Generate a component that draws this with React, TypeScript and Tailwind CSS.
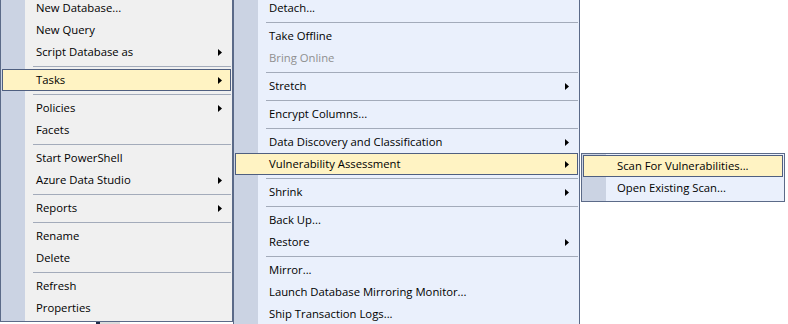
type Entry = { label: string; arrow?: boolean; disabled?: boolean; active?: boolean } | 'sep';

const tasksMenu: Entry[] = [
  { label: 'New Database...' },
  { label: 'New Query' },
  { label: 'Script Database as', arrow: true },
  'sep',
  { label: 'Tasks', arrow: true, active: true },
  'sep',
  { label: 'Policies', arrow: true },
  { label: 'Facets' },
  'sep',
  { label: 'Start PowerShell' },
  { label: 'Azure Data Studio', arrow: true },
  'sep',
  { label: 'Reports', arrow: true },
  'sep',
  { label: 'Rename' },
  { label: 'Delete' },
  'sep',
  { label: 'Refresh' },
  { label: 'Properties' },
];

const taskItems: Entry[] = [
  { label: 'Detach...' },
  'sep',
  { label: 'Take Offline' },
  { label: 'Bring Online', disabled: true },
  'sep',
  { label: 'Stretch', arrow: true },
  'sep',
  { label: 'Encrypt Columns...' },
  'sep',
  { label: 'Data Discovery and Classification', arrow: true },
  { label: 'Vulnerability Assessment', arrow: true, active: true },
  'sep',
  { label: 'Shrink', arrow: true },
  'sep',
  { label: 'Back Up...' },
  { label: 'Restore', arrow: true },
  'sep',
  { label: 'Mirror...' },
  { label: 'Launch Database Mirroring Monitor...' },
  { label: 'Ship Transaction Logs...' },
];

const vaItems: Entry[] = [
  { label: 'Scan For Vulnerabilities...', active: true },
  { label: 'Open Existing Scan...' },
];

function Arrow() {
  return (
    <svg width="4" height="7" viewBox="0 0 4 7" className="ml-auto shrink-0">
      <polygon points="0,0 4,3.5 0,7" fill="#000" />
    </svg>
  );
}

function MenuRows({ items }: { items: Entry[] }) {
  return (
    <>
      {items.map((it, i) =>
        it === 'sep' ? (
          <div key={i} className="h-[6px] pt-[3px] pl-[31px]">
            <div className="h-px bg-[#a3abba]" />
          </div>
        ) : (
          <div
            key={i}
            className={
              it.active
                ? 'flex h-[22px] items-center border border-[#4f5f80] bg-[#fff3c3] pl-[33px] pr-[8px]'
                : 'flex h-[22px] items-center pl-[34px] pr-[9px]'
            }
          >
            <span className={it.disabled ? 'text-[#8f8f8f]' : 'text-black'}>{it.label}</span>
            {it.arrow && <Arrow />}
          </div>
        )
      )}
    </>
  );
}

export default function App() {
  return (
    <div className="relative h-[324px] w-[788px] overflow-hidden bg-white font-['Open_Sans','Liberation_Sans',sans-serif] text-[11.3px] leading-none">
      <div className="flex items-start">
        <div className="relative">
          <div className="-mt-[6px] w-[233px] border border-[#5b6a88] bg-[linear-gradient(to_right,#cbd3e3_24px,#f0f0f0_24px)] px-px py-[2px]">
            <MenuRows items={tasksMenu} />
          </div>
          <div className="flex h-[3px]">
            <div className="ml-[96px] w-[4px] bg-[#1f2b48]" />
            <div className="w-[20px] bg-[#dcdcdc]" />
          </div>
        </div>
        <div className="-mt-[6px] h-[340px] w-[347px] border border-[#5b6a88] bg-[linear-gradient(to_right,#cbd3e3_24px,#eaf0fc_24px)] px-px py-[2px]">
          <MenuRows items={taskItems} />
        </div>
        <div className="ml-px mt-[153px] w-[204px] border border-[#5b6a88] bg-[linear-gradient(to_right,#cbd3e3_24px,#eaf0fc_24px)] px-px pb-[2px] pt-px">
          <MenuRows items={vaItems} />
        </div>
      </div>
    </div>
  );
}
